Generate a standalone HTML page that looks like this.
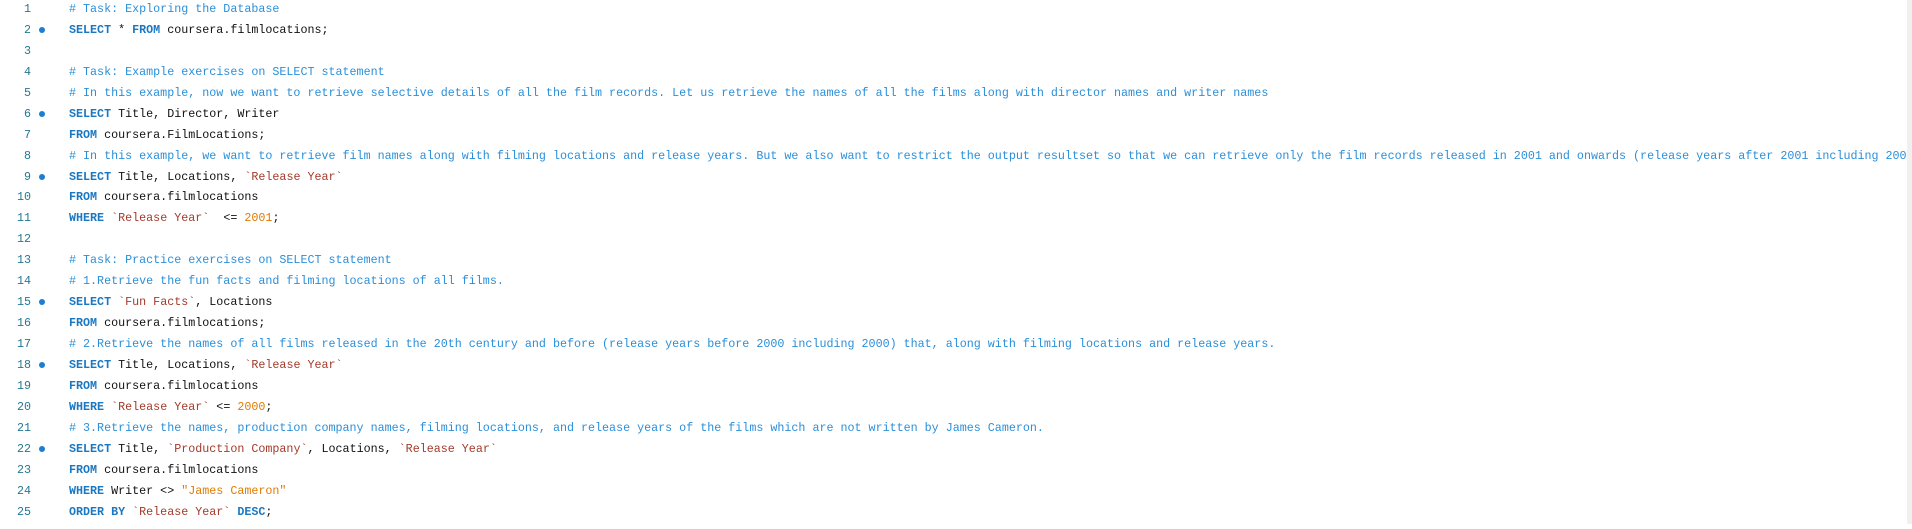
<!DOCTYPE html>
<html><head><meta charset="utf-8"><style>
html,body{margin:0;padding:0;background:#fff;width:1912px;height:524px;overflow:hidden}
.ed{position:absolute;left:0;top:-1px;width:1907px;height:530px;overflow:hidden;font-family:"Liberation Mono",monospace;font-size:11.7px;line-height:20.95px}
.l{position:relative;height:20.95px;display:block}
.n{position:absolute;left:0;width:31px;text-align:right;color:#237893}
.d{position:absolute;left:39px;top:7px;width:6px;height:6px;border-radius:50%;background:#1a7fd4}
.c{position:absolute;left:69px;color:#111;white-space:pre}
.cm{color:#2b8fd8}
.k{color:#1a78c2;font-weight:bold}
.s{color:#a33a2a}
.o{color:#e07b00}
.sb{position:absolute;right:0;top:0;width:5px;height:524px;background:#f0f0f0}
</style></head><body>
<div class="ed"><div class="l"><span class="n">1</span><span class="c cm"># Task: Exploring the Database</span></div><div class="l"><span class="n">2</span><span class="d"></span><span class="c"><span class="k">SELECT</span> * <span class="k">FROM</span> coursera.filmlocations;</span></div><div class="l"><span class="n">3</span></div><div class="l"><span class="n">4</span><span class="c cm"># Task: Example exercises on SELECT statement</span></div><div class="l"><span class="n">5</span><span class="c cm"># In this example, now we want to retrieve selective details of all the film records. Let us retrieve the names of all the films along with director names and writer names</span></div><div class="l"><span class="n">6</span><span class="d"></span><span class="c"><span class="k">SELECT</span> Title, Director, Writer</span></div><div class="l"><span class="n">7</span><span class="c"><span class="k">FROM</span> coursera.FilmLocations;</span></div><div class="l"><span class="n">8</span><span class="c cm"># In this example, we want to retrieve film names along with filming locations and release years. But we also want to restrict the output resultset so that we can retrieve only the film records released in 2001 and onwards (release years after 2001 including 2001).</span></div><div class="l"><span class="n">9</span><span class="d"></span><span class="c"><span class="k">SELECT</span> Title, Locations, <span class="s">`Release Year`</span></span></div><div class="l"><span class="n">10</span><span class="c"><span class="k">FROM</span> coursera.filmlocations</span></div><div class="l"><span class="n">11</span><span class="c"><span class="k">WHERE</span> <span class="s">`Release Year`</span>  &lt;= <span class="o">2001</span>;</span></div><div class="l"><span class="n">12</span></div><div class="l"><span class="n">13</span><span class="c cm"># Task: Practice exercises on SELECT statement</span></div><div class="l"><span class="n">14</span><span class="c cm"># 1.Retrieve the fun facts and filming locations of all films.</span></div><div class="l"><span class="n">15</span><span class="d"></span><span class="c"><span class="k">SELECT</span> <span class="s">`Fun Facts`</span>, Locations</span></div><div class="l"><span class="n">16</span><span class="c"><span class="k">FROM</span> coursera.filmlocations;</span></div><div class="l"><span class="n">17</span><span class="c cm"># 2.Retrieve the names of all films released in the 20th century and before (release years before 2000 including 2000) that, along with filming locations and release years.</span></div><div class="l"><span class="n">18</span><span class="d"></span><span class="c"><span class="k">SELECT</span> Title, Locations, <span class="s">`Release Year`</span></span></div><div class="l"><span class="n">19</span><span class="c"><span class="k">FROM</span> coursera.filmlocations</span></div><div class="l"><span class="n">20</span><span class="c"><span class="k">WHERE</span> <span class="s">`Release Year`</span> &lt;= <span class="o">2000</span>;</span></div><div class="l"><span class="n">21</span><span class="c cm"># 3.Retrieve the names, production company names, filming locations, and release years of the films which are not written by James Cameron.</span></div><div class="l"><span class="n">22</span><span class="d"></span><span class="c"><span class="k">SELECT</span> Title, <span class="s">`Production Company`</span>, Locations, <span class="s">`Release Year`</span></span></div><div class="l"><span class="n">23</span><span class="c"><span class="k">FROM</span> coursera.filmlocations</span></div><div class="l"><span class="n">24</span><span class="c"><span class="k">WHERE</span> Writer &lt;&gt; <span class="o">"James Cameron"</span></span></div><div class="l"><span class="n">25</span><span class="c"><span class="k">ORDER BY</span> <span class="s">`Release Year`</span> <span class="k">DESC</span>;</span></div></div>
<div class="sb"></div>
</body></html>
